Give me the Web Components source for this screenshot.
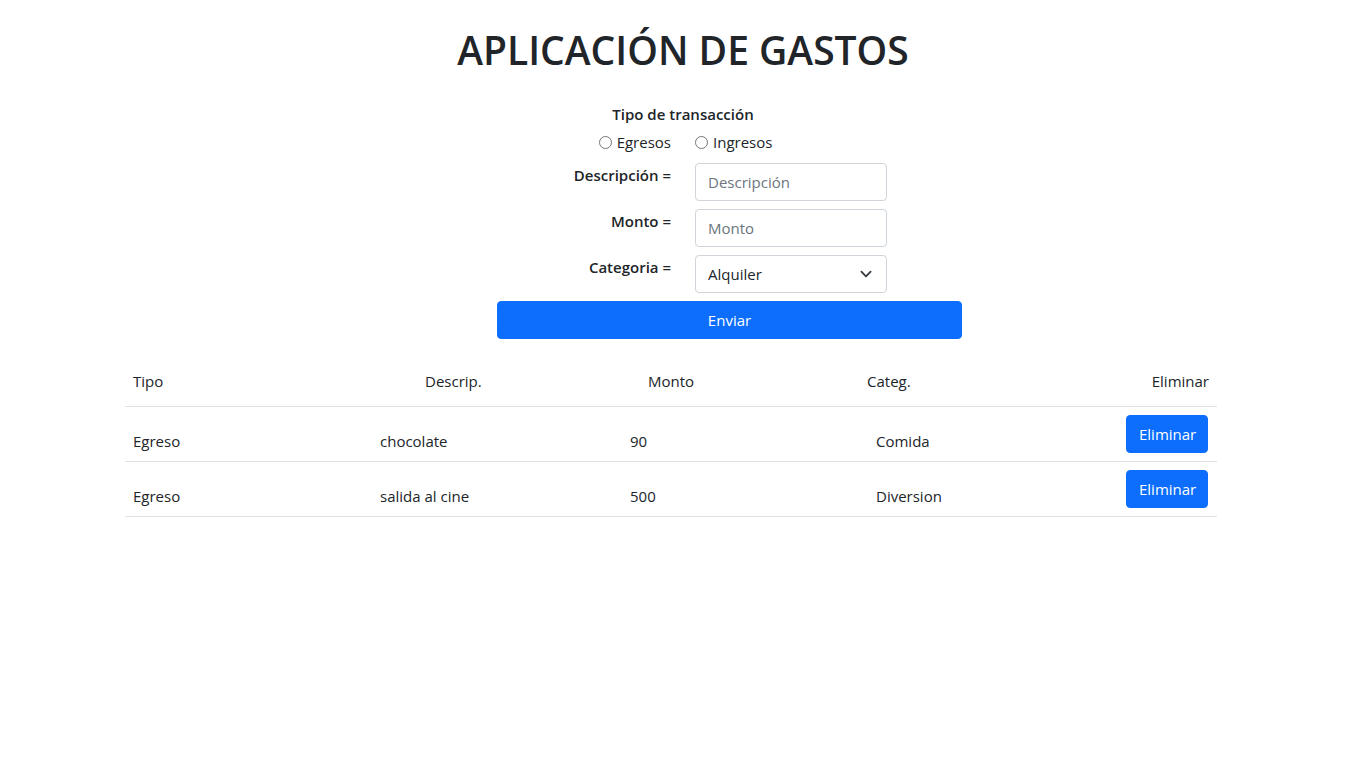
<!DOCTYPE html>
<html lang="es">
<head>
<meta charset="utf-8">
<meta name="viewport" content="width=device-width, initial-scale=1">
<title>Aplicación de gastos</title>
<style>
  body {
    margin: 0;
    background: #fff;
    color: #212529;
    font: 400 15px/24px "Open Sans", "Noto Sans", sans-serif;
  }
</style>
</head>
<body>
<gastos-app></gastos-app>

<template id="t-app">
  <style>
    :host { display: block; max-width: 1116px; margin: 0 auto; padding: 26px 12px 24px; }
    h1 { margin: 0; font-size: 39px; line-height: 48px; font-weight: 600; text-align: center; }
    gastos-form { margin-top: 28px; }
    gastos-table { margin-top: 20px; width: 1092px; max-width: 100%; }
  </style>
  <h1>APLICACIÓN DE GASTOS</h1>
  <gastos-form></gastos-form>
  <gastos-table></gastos-table>
</template>

<template id="t-row">
  <style>
    :host { display: grid; grid-template-columns: 1fr 1fr; column-gap: 24px; }
    .label { text-align: right; }
  </style>
  <div class="label"><slot name="label"></slot></div>
  <div><slot></slot></div>
</template>

<template id="t-button">
  <style>
    :host { display: inline-block; }
    button {
      display: block; width: 100%; height: 38px; padding: 0 12px;
      border: 1px solid #0d6efd; border-radius: 4px;
      background: #0d6efd; color: #fff; font: inherit; cursor: pointer;
    }
    button:hover { background: #0b5ed7; }
  </style>
  <button type="button"><slot></slot></button>
</template>

<template id="t-form">
  <style>
    :host { display: block; }
    form { display: flex; flex-direction: column; gap: 8px; }
    fieldset { margin: 0; padding: 0; border: 0; min-width: 0; }
    legend { width: 100%; padding: 0 0 4px; text-align: center; font-weight: 600; }
    .name { font-weight: 600; }
    .radio { display: inline-flex; align-items: center; gap: 5px; }
    input[type="radio"] { width: 13px; height: 13px; margin: 0; }
    input[type="text"], select {
      box-sizing: border-box; width: 192px; height: 38px; padding: 0 12px;
      border: 1px solid #ced4da; border-radius: 4px;
      background: #fff; color: #212529; font: inherit; display: block;
    }
    input::placeholder { color: #6c757d; opacity: 1; }
    select { appearance: none; }
    .select { position: relative; width: 192px; }
    .select svg { position: absolute; right: 13px; top: 11px; width: 16px; height: 16px; pointer-events: none; }
    .send { box-sizing: border-box; width: 50%; margin: 0 auto; padding-left: 93px; }
    .send gastos-button { display: block; }
  </style>
  <form>
    <fieldset>
      <legend>Tipo de transacción</legend>
      <form-row>
        <label slot="label" class="radio"><input type="radio" name="tipo" value="egreso">Egresos</label>
        <label class="radio"><input type="radio" name="tipo" value="ingreso">Ingresos</label>
      </form-row>
    </fieldset>
    <form-row>
      <label slot="label" class="name" for="descripcion">Descripción =</label>
      <input type="text" id="descripcion" placeholder="Descripción">
    </form-row>
    <form-row>
      <label slot="label" class="name" for="monto">Monto =</label>
      <input type="text" id="monto" placeholder="Monto">
    </form-row>
    <form-row>
      <label slot="label" class="name" for="categoria">Categoria =</label>
      <div class="select">
        <select id="categoria">
          <option>Alquiler</option>
          <option>Comida</option>
          <option>Diversion</option>
        </select>
        <svg viewBox="0 0 16 16" aria-hidden="true"><path fill="none" stroke="#343a40" stroke-linecap="round" stroke-linejoin="round" stroke-width="1.8" d="M3.4 5.7l4.6 4.6 4.6-4.6"/></svg>
      </div>
    </form-row>
    <div class="send"><gastos-button>Enviar</gastos-button></div>
  </form>
</template>

<template id="t-table">
  <style>
    :host { display: block; }
    table, thead, tbody { display: block; }
    tr { display: grid; border-bottom: 1px solid #dee2e6; }
    thead tr { grid-template-columns: 292fr 223fr 219fr 278fr 80fr; padding: 2px 0 5px; }
    tbody tr { grid-template-columns: 247fr 250fr 246fr 250fr 99fr; align-items: end; }
    th, td { padding: 8px; font-weight: 400; text-align: left; }
    th:last-child { text-align: right; }
    td:last-child { display: flex; }
    gastos-button { width: 82px; }
  </style>
  <table>
    <thead>
      <tr><th scope="col">Tipo</th><th scope="col">Descrip.</th><th scope="col">Monto</th><th scope="col">Categ.</th><th scope="col">Eliminar</th></tr>
    </thead>
    <tbody>
      <tr><td>Egreso</td><td>chocolate</td><td>90</td><td>Comida</td><td><gastos-button>Eliminar</gastos-button></td></tr>
      <tr><td>Egreso</td><td>salida al cine</td><td>500</td><td>Diversion</td><td><gastos-button>Eliminar</gastos-button></td></tr>
    </tbody>
  </table>
</template>

<script>
  const define = (name, templateId) => customElements.define(name, class extends HTMLElement {
    constructor() {
      super();
      this.attachShadow({ mode: "open" })
        .append(document.getElementById(templateId).content.cloneNode(true));
    }
  });
  define("form-row", "t-row");
  define("gastos-button", "t-button");
  define("gastos-form", "t-form");
  define("gastos-table", "t-table");
  define("gastos-app", "t-app");
</script>
</body>
</html>
